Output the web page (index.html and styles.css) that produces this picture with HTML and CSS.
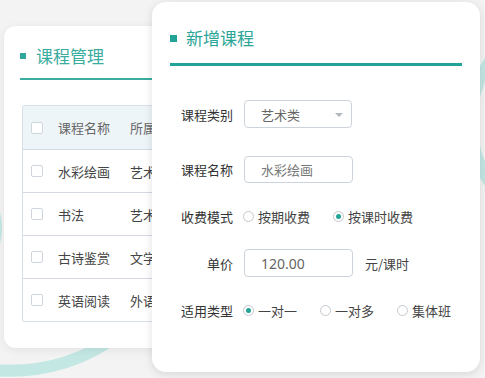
FILE: index.html
```html
<!DOCTYPE html>
<html>
  <head>
    <title>新增课程</title>
    <link rel="stylesheet" href="styles.css">
  </head>
  <body>
    <div class="stage">
      <!-- background rings -->
      <svg class="decor" width="485" height="378" viewBox="0 0 485 378">
        <path d="M 181 251 A 182 182 0 0 1 -161 251" fill="none" stroke="#c3e7e3" stroke-width="12" />
        <circle cx="-60" cy="228" r="56" fill="none" stroke="#c3e7e3" stroke-width="12" />
        <circle cx="578" cy="122" r="107" fill="none" stroke="#c3e7e3" stroke-width="12" />
      </svg>

      <section class="card list-card">
        <h2 class="card-title small"><span class="mark"></span>课程管理</h2>
        <div class="course-table">
          <div class="row head">
            <span class="check"></span>
            <span class="col-name">课程名称</span>
            <span class="col-type">所属类别</span>
          </div>
          <div class="row">
            <span class="check"></span>
            <span class="col-name">水彩绘画</span>
            <span class="col-type">艺术类</span>
          </div>
          <div class="row">
            <span class="check"></span>
            <span class="col-name">书法</span>
            <span class="col-type">艺术类</span>
          </div>
          <div class="row">
            <span class="check"></span>
            <span class="col-name">古诗鉴赏</span>
            <span class="col-type">文学类</span>
          </div>
          <div class="row last">
            <span class="check"></span>
            <span class="col-name">英语阅读</span>
            <span class="col-type">外语类</span>
          </div>
        </div>
      </section>

      <section class="card form-card">
        <h2 class="card-title"><span class="mark"></span>新增课程</h2>
        <div class="form">
          <div class="form-row">
            <label class="form-label">课程类别</label>
            <div class="select">艺术类<span class="arrow"></span></div>
          </div>
          <div class="form-row spaced">
            <label class="form-label">课程名称</label>
            <div class="input muted">水彩绘画</div>
          </div>
          <div class="form-row">
            <label class="form-label">收费模式</label>
            <div class="radio-group">
              <span class="radio-option"><span class="radio"></span>按期收费</span>
              <span class="radio-option"><span class="radio checked"></span>按课时收费</span>
            </div>
          </div>
          <div class="form-row">
            <label class="form-label">单价</label>
            <div class="input price">120.00</div>
            <span class="unit">元/课时</span>
          </div>
          <div class="form-row">
            <label class="form-label">适用类型</label>
            <div class="radio-group">
              <span class="radio-option"><span class="radio checked"></span>一对一</span>
              <span class="radio-option"><span class="radio"></span>一对多</span>
              <span class="radio-option"><span class="radio"></span>集体班</span>
            </div>
          </div>
        </div>
      </section>
    </div>
  </body>
</html>
```

FILE: styles.css
```css
body {
  margin: 0;
  font-family: "Noto Sans", "Noto Sans CJK SC", sans-serif;
  color: #333;
}

.stage {
  position: relative;
  width: 485px;
  height: 378px;
  overflow: hidden;
  background: #f3f3f3;
}

.decor {
  position: absolute;
  left: 0;
  top: 0;
}

.card {
  position: absolute;
  background: #fff;
  box-sizing: border-box;
}

.list-card {
  left: 4px;
  top: 26px;
  width: 260px;
  height: 322px;
  border-radius: 12px;
  box-shadow: 0 2px 10px rgba(0, 0, 0, 0.07);
}

.form-card {
  left: 152px;
  top: 2px;
  width: 328px;
  height: 370px;
  border-radius: 14px;
  box-shadow: 0 2px 10px rgba(0, 0, 0, 0.12);
}

.card-title {
  display: flex;
  align-items: center;
  margin: 0 18px;
  padding: 24px 0 13px;
  line-height: 24px;
  font-size: 17px;
  font-weight: normal;
  font-family: "Noto Sans CJK SC", sans-serif;
  color: #2aa597;
  border-bottom: 3px solid #22a396;
}

.card-title .mark {
  width: 7px;
  height: 7px;
  margin-right: 9px;
  background: #22a396;
}

.card-title.small {
  margin: 0 0 0 16px;
  padding: 18px 0 10px;
  border-bottom: 2px solid #3aaca0;
  color: #3aaca0;
}

.card-title.small .mark {
  width: 6px;
  height: 6px;
  margin-right: 10px;
  background: #2fa79b;
}

/* course list */
.course-table {
  margin: 25px 0 0 18px;
  border: 1px solid #d9dfe6;
  border-radius: 2px;
  font-family: "Noto Sans CJK SC", sans-serif;
  font-size: 13px;
}

.row {
  display: flex;
  align-items: center;
  height: 42px;
  border-bottom: 1px solid #d4d9e2;
  color: #444;
}

.row.last {
  border-bottom: none;
}

.row.head {
  height: 43px;
  background: #eef5f8;
  color: #666;
}

.check {
  width: 10px;
  height: 10px;
  margin: 0 15px 0 8px;
  border: 1px solid #cfd5dc;
  border-radius: 2px;
  background: #fff;
}

.col-name {
  width: 72px;
}

/* form */
.form {
  display: flex;
  flex-direction: column;
  gap: 19px;
  margin-top: 34px;
  font-family: "Noto Sans CJK SC", sans-serif;
  font-size: 13px;
}

.form-row {
  display: flex;
  align-items: center;
  height: 28px;
}

.form-row.spaced {
  margin-top: 8px;
}

.form-label {
  width: 64px;
  margin: 0 11px 0 17px;
  text-align: right;
  color: #333;
}

.select,
.input {
  position: relative;
  box-sizing: border-box;
  display: flex;
  align-items: center;
  width: 109px;
  height: 28px;
  padding-left: 16px;
  border: 1px solid #cdd3da;
  border-radius: 4px;
  color: #666;
}

.select {
  width: 108px;
}

.input.muted {
  height: 27px;
  color: #777;
}

.input.price {
  font-family: "Noto Sans", sans-serif;
  font-size: 14px;
  color: #666;
}

.arrow {
  position: absolute;
  right: 8px;
  top: 12px;
  border-left: 4px solid transparent;
  border-right: 4px solid transparent;
  border-top: 4px solid #b3b8bf;
}

.unit {
  margin-left: 12px;
  color: #444;
}

.radio-group {
  display: flex;
  align-items: center;
  margin-left: -1px;
  color: #444;
}

.radio-option {
  display: flex;
  align-items: center;
  gap: 4px;
  margin-right: 23px;
}

.radio {
  box-sizing: border-box;
  display: flex;
  align-items: center;
  justify-content: center;
  width: 11px;
  height: 11px;
  border: 1px solid #c3c8ce;
  border-radius: 50%;
}

.radio.checked::after {
  content: "";
  width: 5px;
  height: 5px;
  border-radius: 50%;
  background: #22a396;
}
```
